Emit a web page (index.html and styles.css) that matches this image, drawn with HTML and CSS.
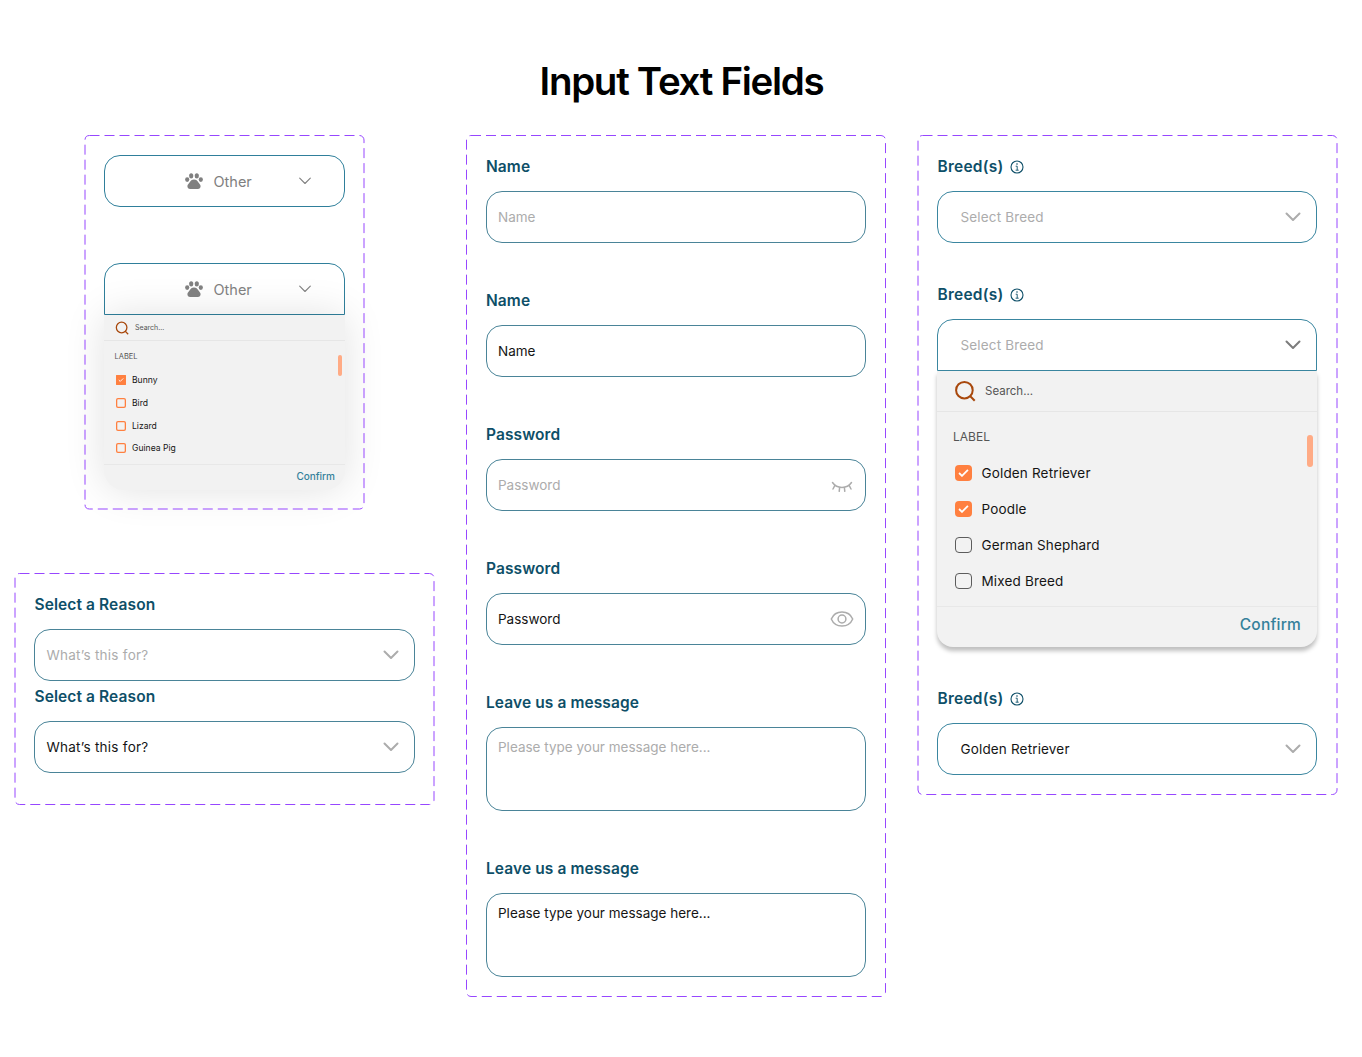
FILE: index.html
```html
<!DOCTYPE html>
<html lang="en">
<head>
    <meta charset="UTF-8">
    <title>Input Text Fields</title>
    <link rel="stylesheet" href="styles.css">
</head>
<body>
    <!-- shared icons -->
    <svg class="sprite" aria-hidden="true">
        <symbol id="chevron" viewBox="0 0 16 10"><path d="M1.500 1.500 8 8 14.500 1.500" fill="none" stroke="currentColor" stroke-width="2" stroke-linecap="round" stroke-linejoin="round"/></symbol>
        <symbol id="chevron-thin" viewBox="0 0 12 8"><path d="M.7 1.200 6 6.500 11.300 1.200" fill="none" stroke="currentColor" stroke-width="1.100" stroke-linecap="round" stroke-linejoin="round"/></symbol>
        <symbol id="paw" viewBox="0 0 18 16">
            <ellipse cx="6.200" cy="2.900" rx="2.100" ry="2.700"/>
            <ellipse cx="11.800" cy="2.900" rx="2.100" ry="2.700"/>
            <ellipse cx="2.200" cy="6.600" rx="2.100" ry="2.300"/>
            <ellipse cx="15.800" cy="6.600" rx="2.100" ry="2.300"/>
            <path d="M9 6.600c2.200 0 3.400 1.200 4.300 2.700.9 1.400 2.300 2.300 2.300 4 0 1.600-1.100 2.600-2.700 2.600H5.100c-1.600 0-2.700-1-2.700-2.600 0-1.700 1.400-2.600 2.300-4C5.600 7.800 6.800 6.600 9 6.600z"/>
        </symbol>
        <symbol id="search" viewBox="0 0 22 22"><g fill="none" stroke="currentColor" stroke-width="2" stroke-linecap="square"><circle cx="10.400" cy="10.200" r="8.300"/><path d="M16.500 16.500 20 20"/></g></symbol>
        <symbol id="info" viewBox="0 0 14 14"><circle cx="7" cy="7" r="6" fill="none" stroke="currentColor" stroke-width="1.100"/><path d="M5.700 6.200H7.200V10.100M5.600 10.200H8.700" fill="none" stroke="currentColor" stroke-width=".9"/><circle cx="7" cy="4" r=".8"/></symbol>
        <symbol id="eye" viewBox="0 0 24 16"><g fill="none" stroke="currentColor" stroke-width="1.500"><path d="M1.300 8C3 4 7 1 12 1s9 3 10.700 7c-1.700 4-5.700 7-10.700 7S3 12 1.300 8z"/><circle cx="12" cy="8" r="3.900"/></g></symbol>
        <symbol id="eye-off" viewBox="0 0 22 12"><path d="M1.500 1.500C6 8 16 8 20.500 1.500M4 4.200 2 8M8.700 6.200 8.200 10.300M13.300 6.200 13.800 10.300M18 4.200 20 8" fill="none" stroke="currentColor" stroke-width="1.500" stroke-linecap="round"/></symbol>
        <symbol id="check" viewBox="0 0 12 9"><path d="M1 4.500 4.300 7.700 11 1" fill="none" stroke="currentColor" stroke-width="2"/></symbol>
    </svg>

    <h1 class="title">Input Text Fields</h1>

    <main class="board">
        <div class="column">
            <section class="frame frame_small">
                <svg class="dashes"><rect rx="4.500"/></svg>
                <div class="select pet">
                    <svg class="paw"><use href="#paw"/></svg>
                    <span class="pet_name">Other</span>
                    <svg class="chevron_thin"><use href="#chevron-thin"/></svg>
                </div>
                <div class="pet_open">
                    <div class="select pet open">
                        <svg class="paw"><use href="#paw"/></svg>
                        <span class="pet_name">Other</span>
                        <svg class="chevron_thin"><use href="#chevron-thin"/></svg>
                    </div>
                    <div class="dropdown mini">
                        <div class="search"><svg class="search_icon"><use href="#search"/></svg><span>Search...</span></div>
                        <div class="list">
                            <span class="list_title">LABEL</span>
                            <div class="option"><span class="box checked"><svg><use href="#check"/></svg></span><span>Bunny</span></div>
                            <div class="option"><span class="box"></span><span>Bird</span></div>
                            <div class="option"><span class="box"></span><span>Lizard</span></div>
                            <div class="option"><span class="box"></span><span>Guinea Pig</span></div>
                            <i class="thumb"></i>
                        </div>
                        <div class="footer"><span class="confirm">Confirm</span></div>
                    </div>
                </div>
            </section>

            <section class="frame frame_reason">
                <svg class="dashes"><rect rx="4.500"/></svg>
                <div class="field">
                    <div class="label">Select a Reason</div>
                    <div class="select"><span class="placeholder">What’s this for?</span><svg class="chevron"><use href="#chevron"/></svg></div>
                </div>
                <div class="field">
                    <div class="label">Select a Reason</div>
                    <div class="select"><span>What’s this for?</span><svg class="chevron"><use href="#chevron"/></svg></div>
                </div>
            </section>
        </div>

        <section class="frame frame_text">
            <svg class="dashes"><rect rx="4.500"/></svg>
            <div class="field">
                <div class="label">Name</div>
                <div class="select"><span class="placeholder">Name</span></div>
            </div>
            <div class="field">
                <div class="label">Name</div>
                <div class="select"><span>Name</span></div>
            </div>
            <div class="field">
                <div class="label">Password</div>
                <div class="select"><span class="placeholder">Password</span><svg class="eye_off"><use href="#eye-off"/></svg></div>
            </div>
            <div class="field">
                <div class="label">Password</div>
                <div class="select"><span>Password</span><svg class="eye"><use href="#eye"/></svg></div>
            </div>
            <div class="field">
                <div class="label">Leave us a message</div>
                <div class="select message"><span class="placeholder">Please type your message here...</span></div>
            </div>
            <div class="field">
                <div class="label">Leave us a message</div>
                <div class="select message"><span>Please type your message here...</span></div>
            </div>
        </section>

        <section class="frame frame_breed">
            <svg class="dashes"><rect rx="4.500"/></svg>
            <div class="field">
                <div class="label">Breed(s)<svg class="info"><use href="#info"/></svg></div>
                <div class="select"><span class="placeholder">Select Breed</span><svg class="chevron"><use href="#chevron"/></svg></div>
            </div>
            <div class="field">
                <div class="label">Breed(s)<svg class="info"><use href="#info"/></svg></div>
                <div class="select open"><span class="placeholder">Select Breed</span><svg class="chevron dark"><use href="#chevron"/></svg></div>
                <div class="dropdown">
                    <div class="search"><svg class="search_icon"><use href="#search"/></svg><span>Search...</span></div>
                    <div class="list">
                        <span class="list_title">LABEL</span>
                        <div class="option"><span class="box checked"><svg><use href="#check"/></svg></span><span>Golden Retriever</span></div>
                        <div class="option"><span class="box checked"><svg><use href="#check"/></svg></span><span>Poodle</span></div>
                        <div class="option"><span class="box"></span><span>German Shephard</span></div>
                        <div class="option"><span class="box"></span><span>Mixed Breed</span></div>
                        <i class="thumb"></i>
                    </div>
                    <div class="footer"><span class="confirm">Confirm</span></div>
                </div>
            </div>
            <div class="field">
                <div class="label">Breed(s)<svg class="info"><use href="#info"/></svg></div>
                <div class="select"><span>Golden Retriever</span><svg class="chevron"><use href="#chevron"/></svg></div>
            </div>
        </section>
    </main>
</body>
</html>
```
FILE: styles.css
```css
* {
    box-sizing: border-box;
}
body {
    margin: 0;
    min-height: 1057px;
    background-color: #fff;
    color: #151515;
    font-family: Inter, "Open Sans", sans-serif;
    font-size: 13.5px;
    font-weight: 370;
}
svg {
    display: block;
    flex: none;
    fill: currentColor;
}
.sprite {
    position: absolute;
    width: 0;
    height: 0;
}
.title {
    margin: 0;
    padding: 56px 0 0 1px;
    height: 135px;
    line-height: 50px;
    text-align: center;
    color: #000;
    font-size: 38.5px;
    font-weight: 600;
    letter-spacing: -1.3px;
}
.board {
    display: flex;
    align-items: flex-start;
    padding-left: 14px;
}
.column {
    display: flex;
    flex-direction: column;
    align-items: center;
    gap: 63.5px;
    width: 420px;
    margin-right: 32px;
}

/* dashed component frames */
.frame {
    position: relative;
    display: flex;
    flex-direction: column;
    width: 420px;
    padding: 20px;
}
.column .frame {
    padding-right: 19.5px;
}
.dashes {
    position: absolute;
    top: 0;
    left: 0;
    width: 100%;
    height: 100%;
    overflow: visible;
}
.dashes rect {
    x: 1px;
    y: 0.5px;
    width: calc(100% - 1px);
    height: calc(100% - 0.5px);
    fill: none;
    stroke: #9747ff;
    stroke-dasharray: 10 5;
}
.frame_small {
    width: 280px;
    height: 374px;
    gap: 56px;
}
.frame_reason {
    gap: 4px;
    padding-bottom: 31.5px;
}
.frame_text {
    gap: 46px;
    margin-right: 31px;
}
.frame_text .dashes rect {
    x: 0.5px;
    height: calc(100% - 1px);
}
.frame_breed {
    gap: 40px;
}
.frame_breed .dashes rect {
    height: calc(100% - 1px);
}

/* fields */
.label {
    display: flex;
    align-items: center;
    gap: 6px;
    height: 24px;
    margin-bottom: 12px;
    padding-bottom: 1px;
    color: #0e4f68;
    font-size: 15.5px;
    font-weight: 600;
    letter-spacing: .1px;
}
.frame_reason .label {
    padding: 0 0 0 .5px;
}
.frame_breed .label {
    padding-left: .5px;
    letter-spacing: .25px;
}
.info {
    width: 14px;
    height: 14px;
    margin-top: 1px;
}
.select {
    display: flex;
    flex: none;
    align-items: center;
    justify-content: space-between;
    height: 52px;
    padding: 0 12px 0 11px;
    border: 1px solid #4a8498;
    border-radius: 16px;
}
.select.open {
    border-radius: 16px 16px 0 0;
}
.select.message {
    align-items: flex-start;
    height: 84px;
    padding-top: 11px;
}
.message span {
    letter-spacing: 0;
}
.frame_reason .select {
    padding-left: 11.5px;
    letter-spacing: .25px;
}
.frame_breed .select,
.option {
    letter-spacing: .16px;
}
.placeholder {
    color: #acacac;
}
.chevron {
    width: 16px;
    height: 10px;
    margin-right: 3px;
    color: #acacac;
}
.chevron.dark {
    color: #7c7c7c;
}
.eye {
    width: 24px;
    height: 16px;
    margin-right: -1px;
    color: #acacac;
}
.eye_off {
    width: 22px;
    height: 12px;
    margin-top: 3px;
    color: #acacac;
}
.frame_breed .select {
    padding-left: 22.5px;
    border-color: #3a86a0;
}

/* pet type select */
.frame_small .pet {
    justify-content: flex-start;
    padding: 0 0 0 79.5px;
    border-color: #2f7f9b;
    color: #808080;
}
.paw {
    width: 18px;
    height: 16px;
}
.pet_name {
    width: 85px;
    margin-left: 11px;
    font-size: 14.5px;
}
.chevron_thin {
    width: 12px;
    height: 8px;
}

/* dropdown */
.dropdown {
    background-color: #f2f2f2;
    border-radius: 0 0 16px 16px;
    box-shadow: 0 4px 4px rgba(0, 0, 0, .25);
}
.search {
    display: flex;
    align-items: center;
    gap: 9px;
    height: 41px;
    padding-left: 17px;
    border-bottom: 1px solid #e6e6e6;
    color: #555;
    font-size: 11.5px;
}
.search_icon {
    width: 22px;
    height: 22px;
    color: #a8480c;
}
.list {
    position: relative;
    height: 195px;
    padding: 15px 0 0 16px;
    border-bottom: 1px solid #e8e8e8;
}
.list_title {
    display: block;
    height: 20px;
    line-height: 20px;
    color: #555;
    font-size: 12px;
}
.option {
    display: flex;
    align-items: center;
    gap: 9.5px;
    height: 36px;
    padding-left: 2px;
}
.list_title + .option {
    margin-top: 8px;
}
.box {
    display: flex;
    align-items: center;
    justify-content: center;
    width: 17px;
    height: 16px;
    border: 1px solid #5c5c5c;
    border-radius: 4px;
}
.box.checked {
    border: 0;
    background-color: #ff8040;
    color: #fff;
}
.box svg {
    width: 11px;
    height: 8px;
}
.thumb {
    position: absolute;
    top: 23px;
    right: 4px;
    width: 6px;
    height: 32px;
    border-radius: 3px;
    background-color: #ffab85;
}
.footer {
    display: flex;
    justify-content: flex-end;
    height: 40px;
    padding: 8px 16px 0 0;
}
.confirm {
    color: #35819b;
    font-size: 15.5px;
    font-weight: 550;
    line-height: 20px;
    letter-spacing: .2px;
}

/* small dropdown */
.mini {
    height: 175px;
    border-radius: 0 0 20px 20px;
    box-shadow: 0 0 40px rgba(0, 0, 0, .12);
}
.mini .search {
    gap: 6px;
    height: 26px;
    padding-left: 11px;
    font-size: 7px;
}
.mini .search_icon {
    width: 14px;
    height: 14px;
}
.mini .list {
    height: 124px;
    padding: 10px 0 0 10.5px;
}
.mini .list_title {
    height: 12px;
    line-height: 12px;
    font-size: 7.5px;
}
.mini .option {
    gap: 6px;
    height: 22.7px;
    padding-left: 1.5px;
    font-size: 8.6px;
    letter-spacing: 0;
}
.mini .list_title + .option {
    margin-top: 6px;
}
.mini .box {
    width: 10px;
    height: 10px;
    border: 0;
    border-radius: 2px;
    box-shadow: inset 0 0 0 1.3px #ff8040;
}
.mini .box.checked {
    border-radius: 1px;
}
.mini .box svg {
    width: 6px;
    height: 4px;
}
.mini .thumb {
    top: 14px;
    right: 2.5px;
    width: 4px;
    height: 21px;
    border-radius: 2px;
}
.mini .footer {
    height: 25px;
    padding: 1px 9.5px 0 0;
}
.mini .confirm {
    font-size: 10px;
    line-height: 20px;
    letter-spacing: 0;
}
```
